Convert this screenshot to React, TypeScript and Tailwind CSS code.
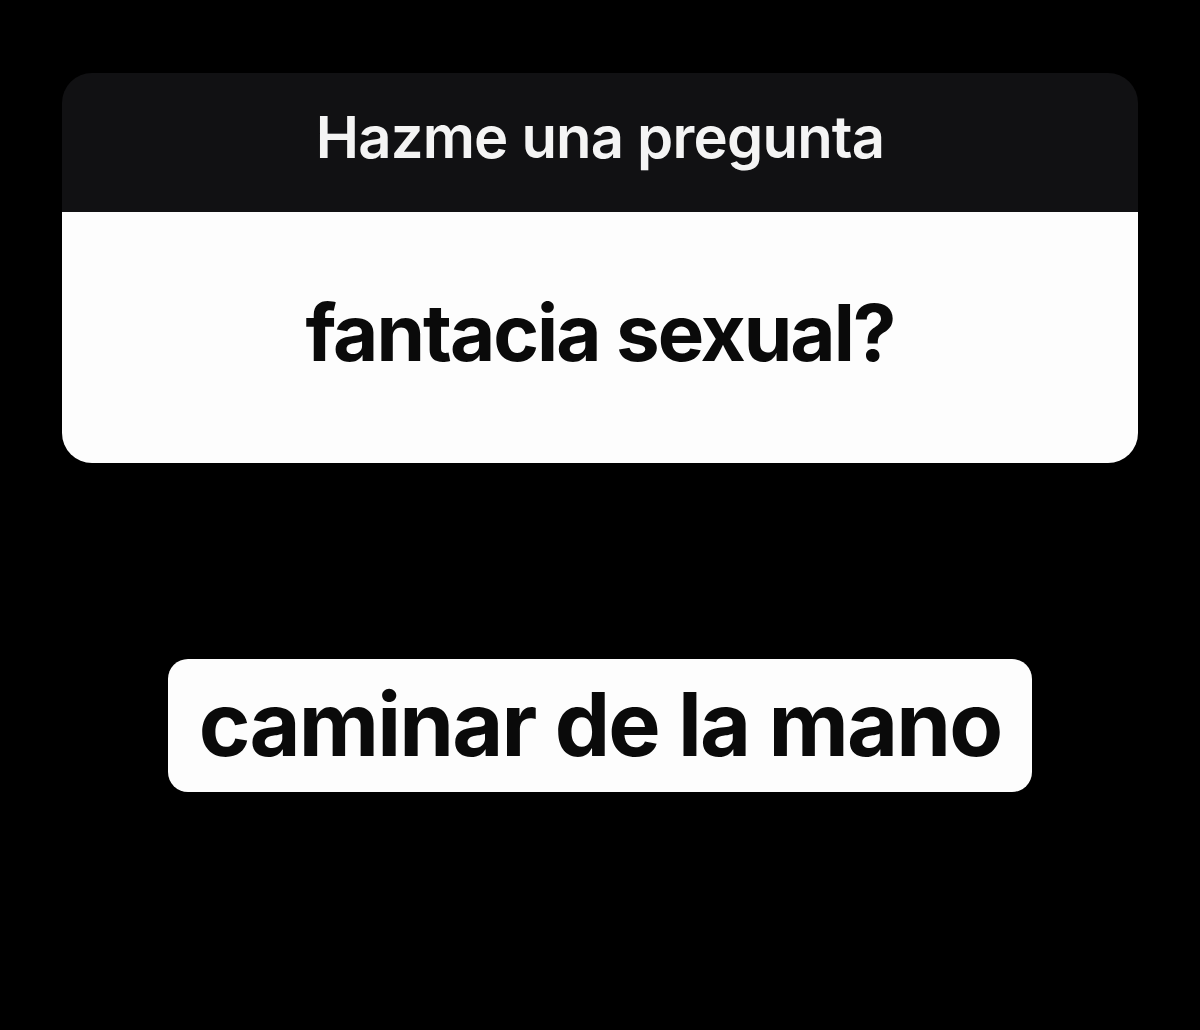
import React from 'react'

const QuestionCard: React.FC<{ prompt: string; question: string }> = ({ prompt, question }) => (
  <div className="mx-[62px] mt-[73px] overflow-hidden rounded-[30px]">
    <div className="flex h-[139px] items-center justify-center bg-[#111113] pb-[12px]">
      <h2 className="text-[58px] font-semibold leading-none tracking-[-0.8px] text-[#f4f4f4]">{prompt}</h2>
    </div>
    <div className="flex h-[251px] items-center justify-center bg-[#fdfdfd] pb-[10px]">
      <p className="text-[78px] font-bold leading-none tracking-[-2px] text-[#0a0a0a]">{question}</p>
    </div>
  </div>
)

export default function App() {
  return (
    <div className="flex h-[1030px] w-full flex-col bg-black font-['Inter',sans-serif]">
      <QuestionCard prompt="Hazme una pregunta" question="fantacia sexual?" />

      {/* answer bubble */}
      <div className="mt-[196px] flex justify-center">
        <div className="flex h-[133px] w-[864px] items-center justify-center rounded-[20px] bg-[#fdfdfd] pb-[4px]">
          <span className="text-[88px] font-bold leading-none tracking-[-1.8px] text-[#0a0a0a]">caminar de la mano</span>
        </div>
      </div>
    </div>
  )
}
